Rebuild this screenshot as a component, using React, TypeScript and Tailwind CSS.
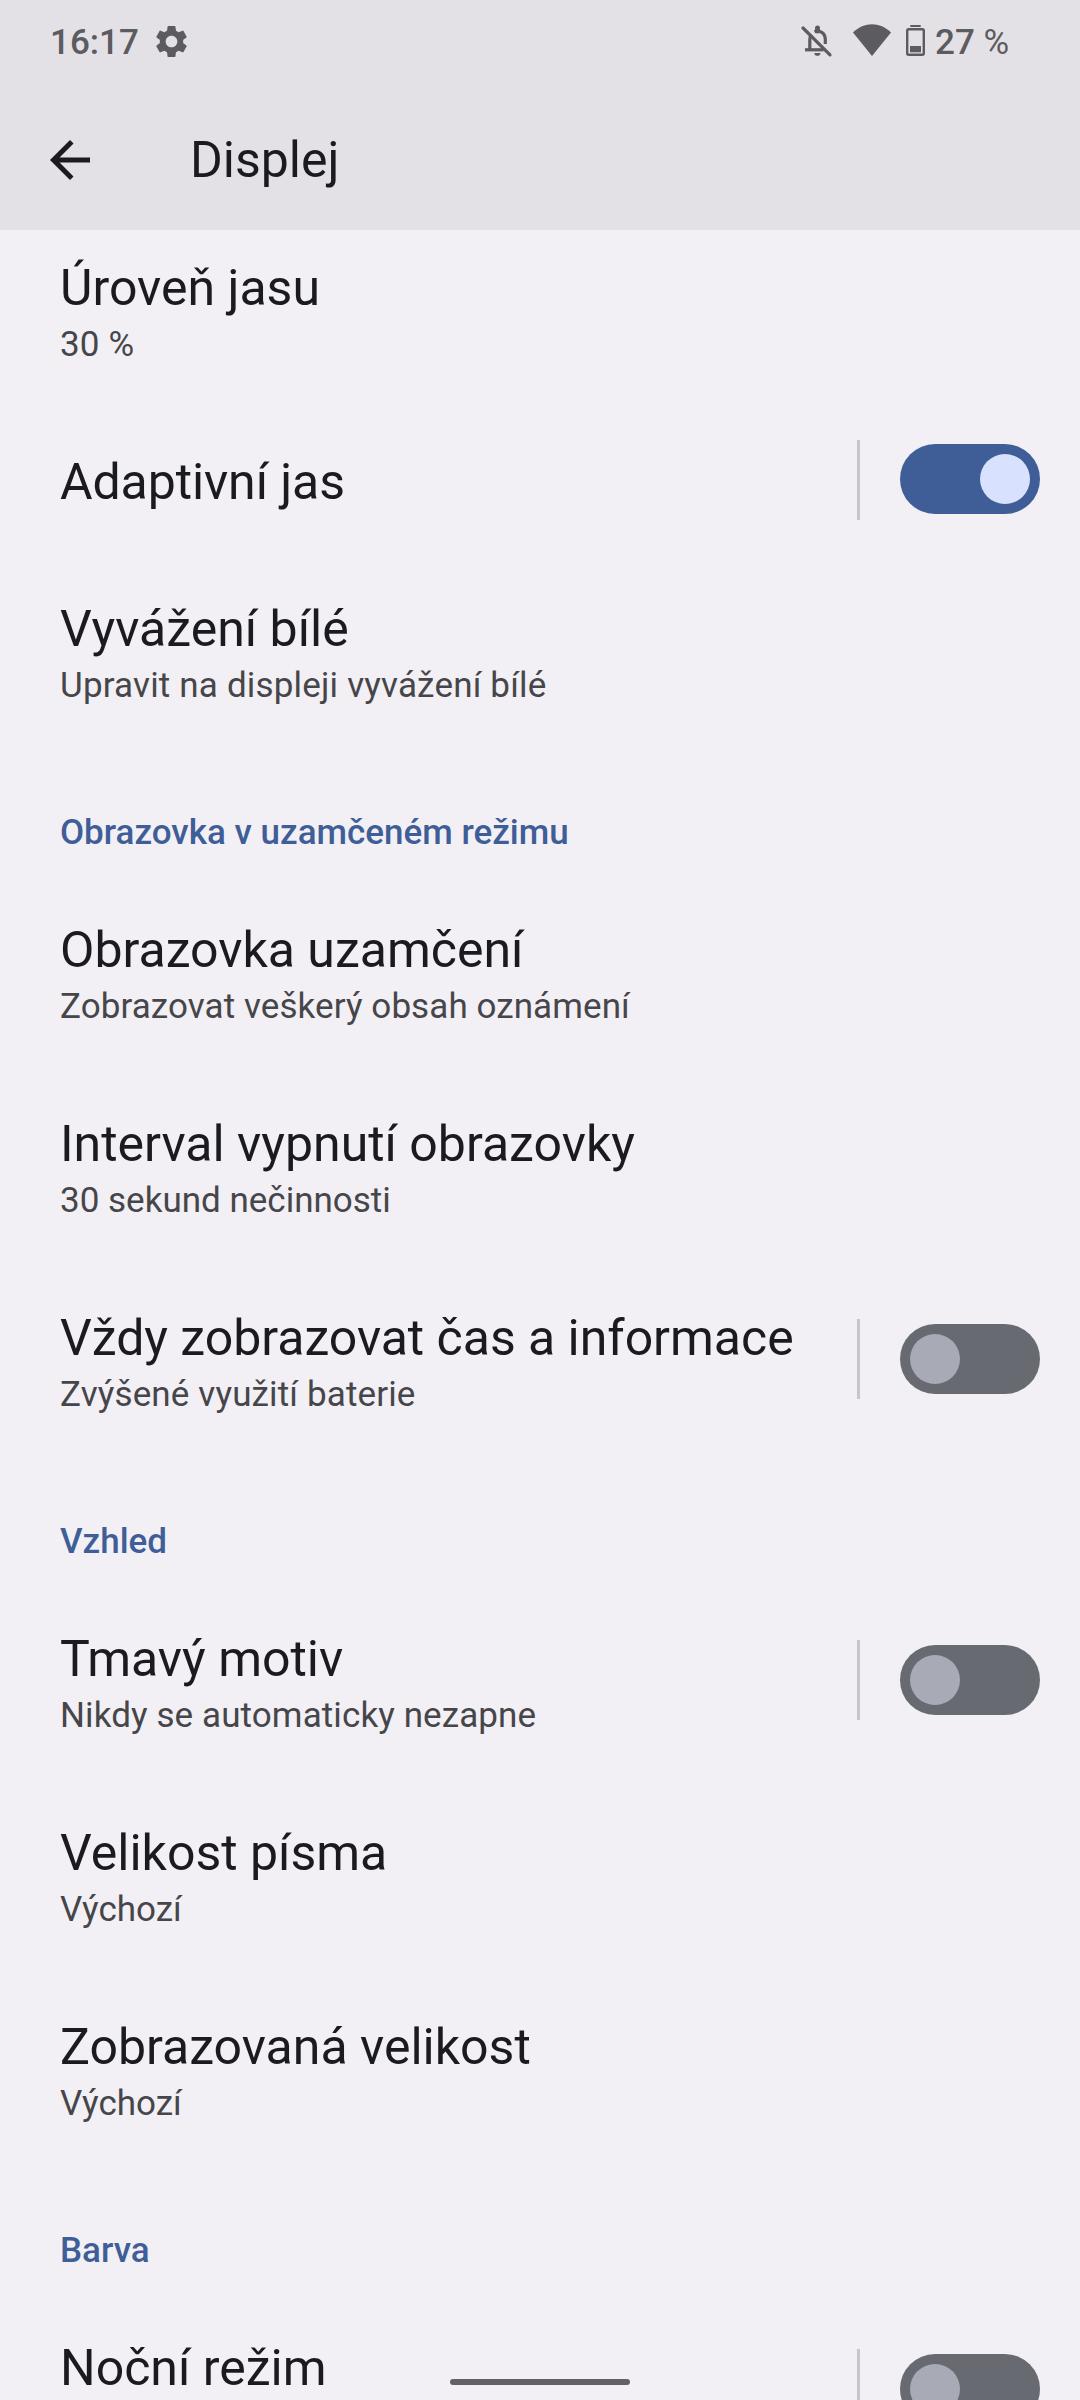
import React from 'react';
import { MdArrowBack, MdSettings } from 'react-icons/md';

type RowProps = { title: string; sub?: string; toggle?: boolean; tall?: boolean; titleClass?: string; subClass?: string };

function Toggle({ on, single }: { on: boolean; single: boolean }) {
  return (
    <div className={single ? 'flex gap-10 pt-[28px]' : 'flex gap-10 pt-[51px]'}>
      <div className="h-20 w-[3px] bg-[#c8c6cc]" />
      <div
        className={
          (single ? 'mt-[4px] ' : 'mt-[5px] ') +
          (on
            ? 'flex h-[70px] w-[140px] items-center justify-end rounded-full bg-[#3f5e98] px-[10px]'
            : 'flex h-[70px] w-[140px] items-center rounded-full bg-[#686a72] px-[10px]')
        }
      >
        <div className={on ? 'size-[50px] rounded-full bg-[#d8e2ff]' : 'size-[50px] rounded-full bg-[#a8abb5]'} />
      </div>
    </div>
  );
}

function Row({ title, sub, toggle, tall, titleClass = '', subClass = '' }: RowProps) {
  const double = Boolean(sub) || tall;
  return (
    <div className={(double ? 'h-[194px]' : 'h-[147px]') + ' flex shrink-0 items-start justify-between pr-10 pl-[60px]'}>
      <div className="pt-[41px]">
        <div className={'text-[50px] leading-[59px] whitespace-nowrap text-[#1b1b1f] ' + titleClass}>{title}</div>
        {sub && <div className={'text-[35px] leading-[53px] whitespace-nowrap text-[#46464a] ' + subClass}>{sub}</div>}
      </div>
      {toggle !== undefined && <Toggle on={toggle} single={!double} />}
    </div>
  );
}

function Section({ children }: { children: string }) {
  return (
    <div className="h-[127px] shrink-0 pt-[59px] pl-[60px] text-[35px] leading-[41px] font-medium text-[#3f5e98]">
      {children}
    </div>
  );
}

function BellOff() {
  return (
    <svg className="size-[34px]" viewBox="0 0 34 34" fill="none" stroke="#5c5b5f" strokeWidth="3.2">
      <path d="M9.800 26V15.500C9.800 13.500 10.300 12 11.300 10.500M14.500 7.800C19.500 5.500 25.300 9 25.300 15.500V20" />
      <path d="M5 25.800H23.500" />
      <path d="M3 4L30 30.800" strokeLinecap="round" />
      <path d="M17.500 4V7" strokeWidth="5" strokeLinecap="round" />
      <path d="M14.300 29H20.500C20.500 32.800 14.300 32.800 14.300 29Z" fill="#5c5b5f" stroke="none" />
    </svg>
  );
}

function Wifi() {
  return (
    <svg className="h-[32px] w-[38px]" viewBox="0 0 38 32" fill="#5c5b5f">
      <path d="M19 32L0 8.500C11 -2.500 27 -2.500 38 8.500Z" />
    </svg>
  );
}

function Battery() {
  return (
    <svg className="h-[31px] w-[19px]" viewBox="0 0 19 31" fill="#5c5b5f">
      <rect x="4.300" y="0" width="10.400" height="2" />
      <rect x="1.200" y="4.200" width="16.600" height="25.600" rx="1.500" fill="none" stroke="#5c5b5f" strokeWidth="2.400" />
      <rect x="4" y="21" width="11" height="6.300" />
    </svg>
  );
}

export default function App() {
  return (
    <div className="relative flex h-[2400px] w-[1080px] flex-col overflow-hidden bg-[#f2f0f5] font-['Roboto',sans-serif]">
      <header className="h-[230px] shrink-0 bg-[#e3e1e6]">
        <div className="flex h-[90px] items-start justify-between pr-[70px] pl-[50px] text-[35px] leading-[41px] font-medium text-[#5c5b5f]">
          <div className="flex">
            <span className="mt-[22px] w-[102px]">16:17</span>
            <MdSettings className="mt-[22px] size-[39px]" />
          </div>
          <div className="flex">
            <div className="mt-[24px] mr-[19px]"><BellOff /></div>
            <div className="mt-[24px] mr-[15px]"><Wifi /></div>
            <div className="mt-[25px] mr-[10px]"><Battery /></div>
            <span className="mt-[22px] w-[75px] whitespace-nowrap">27 <span className="font-normal">%</span></span>
          </div>
        </div>
        <div className="flex h-[140px] items-center pl-10">
          <MdArrowBack className="size-[60px] text-[#1b1b1f]" />
          <h1 className="ml-[90px] text-[50px] leading-[59px] text-[#1b1b1f]">Displej</h1>
        </div>
      </header>
      <main className="flex min-h-0 flex-1 flex-col overflow-hidden">
        <div className="-mt-3 flex flex-col">
          <Row title="Úroveň jasu" sub="30 %" subClass="tracking-[0.2px]" />
          <Row title="Adaptivní jas" toggle={true} titleClass="tracking-[-0.1px]" />
          <Row title="Vyvážení bílé" sub="Upravit na displeji vyvážení bílé" subClass="tracking-[0.18px]" />
          <Section>Obrazovka v uzamčeném režimu</Section>
          <Row title="Obrazovka uzamčení" sub="Zobrazovat veškerý obsah oznámení" subClass="tracking-[0.08px]" />
          <Row title="Interval vypnutí obrazovky" sub="30 sekund nečinnosti" />
          <Row
            title="Vždy zobrazovat čas a informace"
            sub="Zvýšené využití baterie"
            toggle={false}
            titleClass="tracking-[-0.03px]"
            subClass="tracking-[0.14px]"
          />
          <Section>Vzhled</Section>
          <Row title="Tmavý motiv" sub="Nikdy se automaticky nezapne" subClass="tracking-[0.1px]" toggle={false} />
          <Row title="Velikost písma" sub="Výchozí" />
          <Row title="Zobrazovaná velikost" sub="Výchozí" />
          <Section>Barva</Section>
          <Row title="Noční režim" tall toggle={false} />
        </div>
      </main>
      <div className="absolute top-[2379px] left-[450px] h-[6px] w-[180px] rounded-full bg-[#626166]" />
    </div>
  );
}
